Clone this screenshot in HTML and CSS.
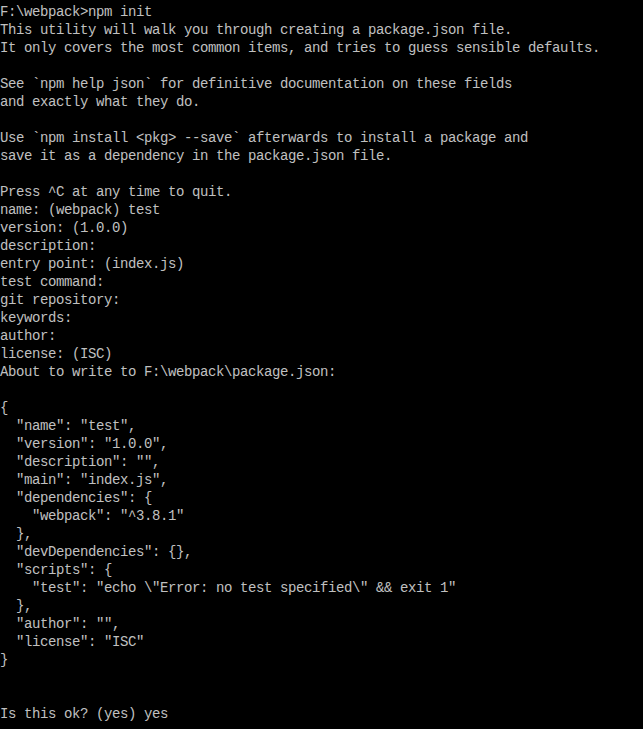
FILE: index.html
```html
<!DOCTYPE html>
<html lang="en">
<head>
<meta charset="utf-8">
<title>Command Prompt</title>
<link rel="stylesheet" href="styles.css">
</head>
<body>
<pre class="console">F:\webpack&gt;npm init
This utility will walk you through creating a package.json file.
It only covers the most common items, and tries to guess sensible defaults.

See `npm help json` for definitive documentation on these fields
and exactly what they do.

Use `npm install &lt;pkg&gt; --save` afterwards to install a package and
save it as a dependency in the package.json file.

Press ^C at any time to quit.
name: (webpack) test
version: (1.0.0)
description:
entry point: (index.js)
test command:
git repository:
keywords:
author:
license: (ISC)
About to write to F:\webpack\package.json:

{
  "name": "test",
  "version": "1.0.0",
  "description": "",
  "main": "index.js",
  "dependencies": {
    "webpack": "^3.8.1"
  },
  "devDependencies": {},
  "scripts": {
    "test": "echo \"Error: no test specified\" &amp;&amp; exit 1"
  },
  "author": "",
  "license": "ISC"
}


Is this ok? (yes) yes</pre>
</body>
</html>
```
FILE: styles.css
```css
html, body {
  margin: 0;
  padding: 0;
  background: #000;
  height: 100%;
  overflow: hidden;
}
.console {
  margin: 0;
  padding: 3px 0 0 0;
  color: #c0c0c0;
  font-family: "Liberation Mono", "DejaVu Sans Mono", monospace;
  font-size: 14px;
  letter-spacing: -0.4px;
  line-height: 18px;
  white-space: pre;
}
```
